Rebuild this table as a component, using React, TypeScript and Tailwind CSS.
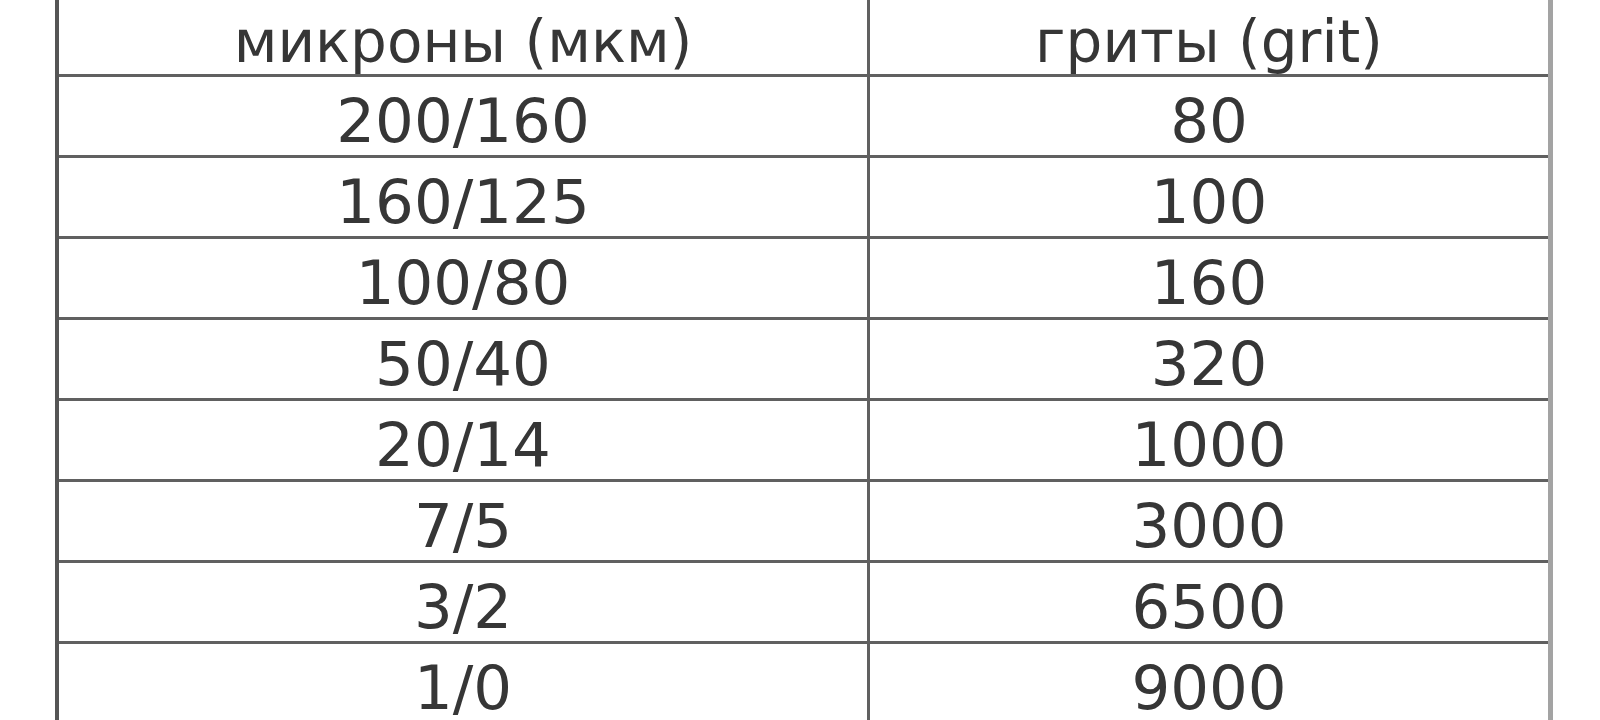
const rows = [
  ['200/160', '80'],
  ['160/125', '100'],
  ['100/80', '160'],
  ['50/40', '320'],
  ['20/14', '1000'],
  ['7/5', '3000'],
  ['3/2', '6500'],
  ['1/0', '9000'],
];

export default function App() {
  return (
    <div className="h-[720px] w-[1600px] overflow-hidden bg-white font-['DejaVu_Sans',sans-serif] text-[61px] leading-[60px] text-[#363636]">
      <div className="ml-[55px] w-[1498px] border-l-4 border-r-[5px] border-l-[#555555] border-r-[#a3a3a3] blur-[0.7px]">
        {/* header */}
        <div className="flex h-[77px] border-b-[3px] border-[#606060] text-[58px]">
          <div className="w-[811px] shrink-0 border-r-[3px] border-[#606060] pt-[12px] text-center">
            микроны (мкм)
          </div>
          <div className="flex-1 pt-[12px] text-center">гриты (grit)</div>
        </div>

        {rows.map(([mkm, grit], i) => (
          <div
            key={mkm}
            className={
              i === rows.length - 1
                ? 'flex h-[76px]'
                : 'flex h-[81px] border-b-[3px] border-[#606060]'
            }
          >
            <div className="w-[811px] shrink-0 border-r-[3px] border-[#606060] pt-[14px] text-center">
              {mkm}
            </div>
            <div className="flex-1 pt-[14px] text-center">{grit}</div>
          </div>
        ))}
      </div>
    </div>
  );
}
